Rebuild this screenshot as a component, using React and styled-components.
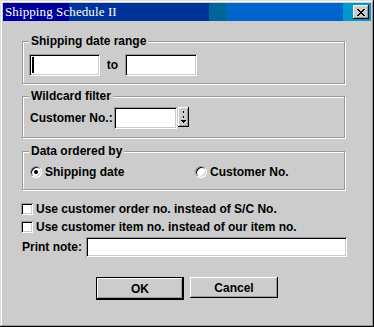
import React from 'react';
import styled, {createGlobalStyle} from 'styled-components';

const face = '#cccccc';
const shadow = '#999999';

const Global = createGlobalStyle`
  html, body {
    margin: 0;
    padding: 0;
    background: ${face};
  }
  body {
    font-family: "Liberation Sans", Arial, sans-serif;
    font-size: 12px;
    font-weight: bold;
    color: #000;
  }
`;

const sunken = `
  box-shadow: inset 1px 1px 0 ${shadow}, inset -1px -1px 0 #fff,
    inset 2px 2px 0 #000, inset -2px -2px 0 ${face};
`;

const raised = `
  box-shadow: inset -1px -1px 0 #000, inset 1px 1px 0 #fff,
    inset -2px -2px 0 ${shadow}, inset 2px 2px 0 ${face};
`;

const Frame = styled.div`
  width: 374px;
  height: 327px;
  box-sizing: border-box;
  padding: 3px;
  background: ${face};
  display: flex;
  flex-direction: column;
  box-shadow: inset -1px -1px 0 #000, inset 1px 1px 0 #dddddd,
    inset -2px -2px 0 ${shadow}, inset 2px 2px 0 #fff;
`;

const TitleBar = styled.div`
  height: 18px;
  display: flex;
  align-items: center;
  justify-content: space-between;
  background: linear-gradient(
    to right,
    #000099 0 66px,
    #003399 66px 206px,
    #006699 206px 224px,
    #0066cc 224px 340px,
    #0099cc 340px
  );
`;

const Title = styled.span`
  font-family: "Liberation Serif", "DejaVu Serif", serif;
  font-weight: normal;
  font-size: 13px;
  color: #fff;
  padding-left: 2px;
  letter-spacing: 0.1px;
`;

const CloseButton = styled.div`
  width: 16px;
  height: 14px;
  margin-right: 2px;
  background: ${face};
  display: flex;
  align-items: center;
  justify-content: center;
  ${raised}
`;

const Body = styled.div`
  flex: 1;
  display: flex;
  flex-direction: column;
  padding: 20px 26px 0 19px;
`;

const Group = styled.div`
  position: relative;
  height: ${p => p.$h}px;
  margin-top: ${p => p.$mt || 0}px;
  box-sizing: border-box;
  border: 1px solid ${shadow};
  box-shadow: 1px 1px 0 #fff, inset 1px 1px 0 #fff;
  padding: ${p => p.$pad};
  display: flex;
  align-items: flex-start;
`;

const Legend = styled.span`
  position: absolute;
  left: 6px;
  top: -8px;
  padding: 0 2px;
  background: ${face};
  line-height: 14px;
`;

const Field = styled.div`
  width: ${p => p.$w}px;
  height: ${p => p.$h || 22}px;
  background: #fff;
  display: flex;
  align-items: center;
  padding-left: 3px;
  box-sizing: border-box;
  flex-shrink: 0;
  ${sunken}
`;

const Caret = styled.span`
  width: 2px;
  height: 16px;
  background: #000;
`;

const To = styled.span`
  width: 25px;
  text-align: center;
  line-height: 22px;
`;

const Label = styled.span`
  width: ${p => p.$w}px;
  line-height: ${p => p.$lh || 22}px;
  flex-shrink: 0;
`;

const Spinner = styled.div`
  width: 11px;
  height: 20px;
  margin-left: 1px;
  background: ${face};
  display: flex;
  align-items: center;
  justify-content: center;
  ${raised}
`;

const Option = styled.div`
  width: ${p => p.$w || 'auto'};
  display: flex;
  align-items: center;
  gap: 3px;
  height: 12px;
  line-height: 12px;
`;

const RadioCircle = styled.span`
  width: 12px;
  height: 12px;
  box-sizing: border-box;
  border-radius: 50%;
  border: 1px solid;
  border-color: ${shadow} #fff #fff ${shadow};
  background: #fff;
  display: flex;
  align-items: center;
  justify-content: center;
  box-shadow: inset 1px 1px 0 #000, inset -1px -1px 0 ${face};
`;

const Dot = styled.span`
  width: 4px;
  height: 4px;
  border-radius: 50%;
  background: #000;
`;

const CheckRow = styled.div`
  display: flex;
  align-items: center;
  gap: 3px;
  height: 12px;
  line-height: 12px;
  margin-top: ${p => p.$mt}px;
  margin-left: -1px;
`;

const Box = styled.span`
  width: 12px;
  height: 12px;
  box-sizing: border-box;
  background: #fff;
  ${sunken}
`;

const NoteRow = styled.div`
  display: flex;
  align-items: center;
  margin-top: 4px;
`;

const ButtonRow = styled.div`
  display: flex;
  align-items: flex-start;
  gap: 6px;
  margin-top: 20px;
  padding-left: 74px;
`;

const Button = styled.div`
  width: 88px;
  height: ${p => (p.$default ? 23 : 21)}px;
  box-sizing: border-box;
  display: flex;
  align-items: center;
  justify-content: center;
  background: ${face};
  border: ${p => (p.$default ? '1px solid #000' : 'none')};
  ${raised}
`;

function Radio({checked, children, w}) {
  return (
    <Option $w={w}>
      <RadioCircle>{checked && <Dot />}</RadioCircle>
      {children}
    </Option>
  );
}

export default function App() {
  return (
    <>
      <Global />
      <Frame>
        <TitleBar>
          <Title>Shipping Schedule II</Title>
          <CloseButton>
            <svg width="8" height="7" viewBox="0 0 8 7" shapeRendering="crispEdges">
              <path d="M0 0h2v1h-2zM6 0h2v1h-2zM1 1h2v1h-2zM5 1h2v1h-2zM2 2h4v1h-4zM3 3h2v1h-2zM2 4h4v1h-4zM1 5h2v1h-2zM5 5h2v1h-2zM0 6h2v1h-2zM6 6h2v1h-2z" fill="#000" />
            </svg>
          </CloseButton>
        </TitleBar>
        <Body>
          <Group $h={43} $pad="12px 6px 7px">
            <Legend>Shipping date range</Legend>
            <Field $w={71}>
              <Caret />
            </Field>
            <To>to</To>
            <Field $w={72} />
          </Group>
          <Group $h={42} $mt={12} $pad="10px 7px 8px">
            <Legend>Wildcard filter</Legend>
            <Label $w={84}>Customer No.:</Label>
            <Field $w={63} />
            <Spinner>
              <svg width="5" height="14" viewBox="0 0 5 14" shapeRendering="crispEdges">
                <path d="M2 1h1v2h-1zM2 6h1v2h-1zM0 10h5v1h-5zM1 11h3v1h-3zM2 12h1v1h-1z" fill="#000" />
              </svg>
            </Spinner>
          </Group>
          <Group $h={39} $mt={13} $pad="14px 7px 11px">
            <Legend>Data ordered by</Legend>
            <Radio checked w="165px">Shipping date</Radio>
            <Radio>Customer No.</Radio>
          </Group>
          <CheckRow $mt={13}>
            <Box />
            Use customer order no. instead of S/C No.
          </CheckRow>
          <CheckRow $mt={6}>
            <Box />
            Use customer item no. instead of our item no.
          </CheckRow>
          <NoteRow>
            <Label $w={64} $lh={20}>Print note:</Label>
            <Field $w={261} $h={20} />
          </NoteRow>
          <ButtonRow>
            <Button $default>OK</Button>
            <Button>Cancel</Button>
          </ButtonRow>
        </Body>
      </Frame>
    </>
  );
}
